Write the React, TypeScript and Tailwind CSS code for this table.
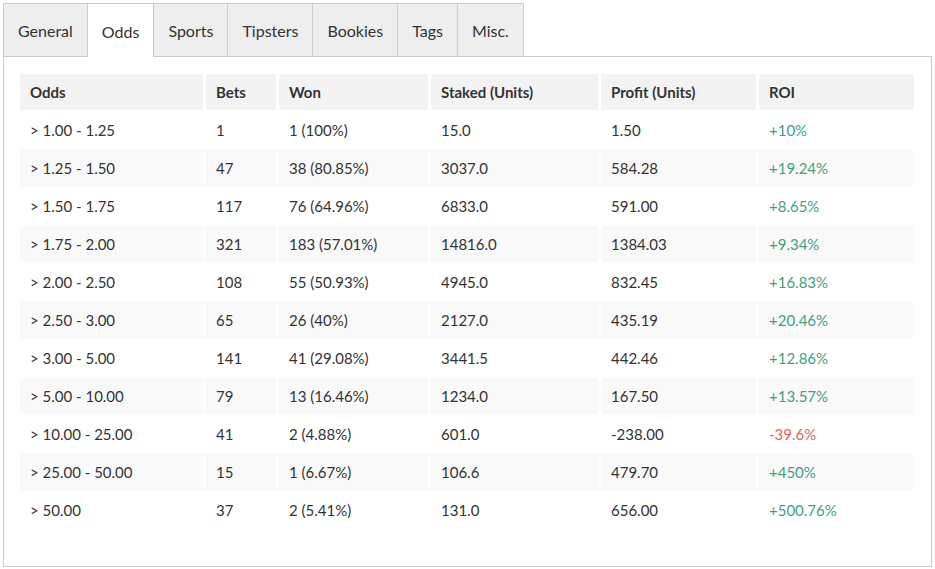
import React from "react"

const tabs = ["General", "Odds", "Sports", "Tipsters", "Bookies", "Tags", "Misc."]

const rows: [string, string, string, string, string, string][] = [
  ["> 1.00 - 1.25", "1", "1 (100%)", "15.0", "1.50", "+10%"],
  ["> 1.25 - 1.50", "47", "38 (80.85%)", "3037.0", "584.28", "+19.24%"],
  ["> 1.50 - 1.75", "117", "76 (64.96%)", "6833.0", "591.00", "+8.65%"],
  ["> 1.75 - 2.00", "321", "183 (57.01%)", "14816.0", "1384.03", "+9.34%"],
  ["> 2.00 - 2.50", "108", "55 (50.93%)", "4945.0", "832.45", "+16.83%"],
  ["> 2.50 - 3.00", "65", "26 (40%)", "2127.0", "435.19", "+20.46%"],
  ["> 3.00 - 5.00", "141", "41 (29.08%)", "3441.5", "442.46", "+12.86%"],
  ["> 5.00 - 10.00", "79", "13 (16.46%)", "1234.0", "167.50", "+13.57%"],
  ["> 10.00 - 25.00", "41", "2 (4.88%)", "601.0", "-238.00", "-39.6%"],
  ["> 25.00 - 50.00", "15", "1 (6.67%)", "106.6", "479.70", "+450%"],
  ["> 50.00", "37", "2 (5.41%)", "131.0", "656.00", "+500.76%"],
]

const widths = ["w-[183px]", "w-[70px]", "w-[149px]", "w-[167px]", "w-[155px]", "w-[155px]"]
const headers = ["Odds", "Bets", "Won", "Staked (Units)", "Profit (Units)", "ROI"]

export default function App() {
  return (
    <div className="bg-white w-[935px] h-[569px] pt-[3px] pl-[3px] font-['Lato',sans-serif] text-[#333]">
      {/* Tabs */}
      <div className="flex w-[929px]">
        {tabs.map((t, i) => (
          <div
            key={t}
            className={
              "h-[54px] flex items-center pt-[2px] px-[14px] text-[16px] border-t border-r border-[#cccccc] " +
              (i === 0 ? "border-l " : "") +
              (t === "Odds" ? "bg-white" : "bg-[#eeeeee] border-b")
            }
          >
            {t}
          </div>
        ))}
        <div className="flex-1 border-b border-[#cccccc]" />
      </div>

      {/* Panel */}
      <div className="w-[929px] h-[510px] border border-[#cccccc] border-t-0 pt-[15px] px-[13px]">
        <table className="border-separate [border-spacing:3px_2px] text-[15px] leading-none">
          <thead>
            <tr>
              {headers.map((h, i) => (
                <th key={h} className={"h-[36px] bg-[#f3f3f3] text-left font-bold pl-[10px] " + widths[i]}>
                  {h}
                </th>
              ))}
            </tr>
          </thead>
          <tbody>
            {rows.map((r, ri) => (
              <tr key={ri}>
                {r.map((c, ci) => (
                  <td
                    key={ci}
                    className={
                      "h-[36px] pl-[10px] " +
                      (ri % 2 === 1 ? "bg-[#f9f9f9] " : "") +
                      (ci === 5 ? (c.startsWith("-") ? "text-[#e0675a]" : "text-[#3f9f83]") : "")
                    }
                  >
                    {c}
                  </td>
                ))}
              </tr>
            ))}
          </tbody>
        </table>
      </div>
    </div>
  )
}
